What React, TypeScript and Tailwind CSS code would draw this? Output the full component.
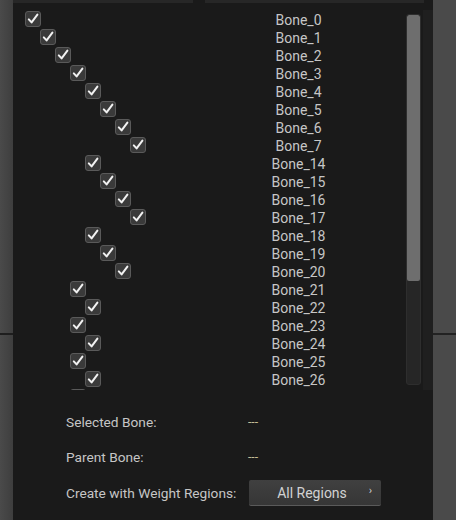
import React from "react";

const rows: [string, number][] = [
  ["Bone_0", 0],
  ["Bone_1", 1],
  ["Bone_2", 2],
  ["Bone_3", 3],
  ["Bone_4", 4],
  ["Bone_5", 5],
  ["Bone_6", 6],
  ["Bone_7", 7],
  ["Bone_14", 4],
  ["Bone_15", 5],
  ["Bone_16", 6],
  ["Bone_17", 7],
  ["Bone_18", 4],
  ["Bone_19", 5],
  ["Bone_20", 6],
  ["Bone_21", 3],
  ["Bone_22", 4],
  ["Bone_23", 3],
  ["Bone_24", 4],
  ["Bone_25", 3],
  ["Bone_26", 4],
  ["", 3],
];

function Check() {
  return (
    <div className="w-[16px] h-[16px] rounded-[3px] bg-[#3a3a3a] border border-[#5a5a5a] flex items-center justify-center">
      <svg width="12" height="12" viewBox="0 0 12 12">
        <path d="M1.8 6.4 L4.6 9.4 L10.4 1.6" fill="none" stroke="#f2f2f2" strokeWidth="2" strokeLinecap="round" strokeLinejoin="round" />
      </svg>
    </div>
  );
}

export default function App() {
  return (
    <div
      className="w-[456px] h-[520px] flex bg-[#1a1a1a] overflow-hidden text-[14px] text-[#c6c6c6]"
      style={{ fontFamily: "Roboto, 'Noto Sans', sans-serif" }}
    >
      <div className="w-[13px] flex flex-col bg-gradient-to-r from-[#4a4a4a] to-[#3e3e3e]">
        <div className="h-[333px]" />
        <div className="h-[2px] bg-[#1e1e1e]" />
      </div>
      <div className="w-[420px] flex flex-col bg-[#1a1a1a]">
        <div className="h-[3px] flex">
          <div className="w-[180px] bg-[#272727]" />
          <div className="w-[12px]" />
          <div className="w-[219px] bg-[#272727]" />
        </div>
        <div className="flex mt-[7px] h-[380px]">
          <div className="w-[379px] h-[380px] overflow-hidden">
            {rows.map(([name, lvl], i) => (
              <div key={i} className="h-[18px] flex items-center">
                <div className="w-[192px] flex items-center">
                  <div style={{ width: 12 + lvl * 15 }} />
                  <Check />
                </div>
                <div className="flex-1 text-center leading-[18px] pt-[1px]">{name}</div>
              </div>
            ))}
          </div>
          <div className="w-[14px]" />
          <div className="w-[15px] mt-[4px] h-[371px] rounded-[3px] bg-[#262626] border border-[#2e2e2e] flex flex-col overflow-hidden">
            <div className="h-[266px] bg-[#6e6e6e] rounded-[2px]" />
          </div>
          <div className="w-[2px]" />
          <div className="w-[10px] bg-[#1f1f1f]" />
        </div>
        <div className="flex-1 flex pl-[53px] pt-[23px] bg-[#1a1a1a] text-[13.7px]">
          <div className="flex flex-col">
            <div className="h-[18px] flex items-center w-[182px]">Selected Bone:</div>
            <div className="h-[18px] mt-[17px] flex items-center">Parent Bone:</div>
            <div className="h-[18px] mt-[18px] flex items-center">Create with Weight Regions:</div>
          </div>
          <div className="flex flex-col">
            <div className="h-[18px] flex items-center text-[#c2bd96] text-[12px]">---</div>
            <div className="h-[18px] mt-[17px] flex items-center text-[#c2bd96] text-[12px]">---</div>
            <div className="mt-[14px] ml-[1px] w-[132px] h-[26px] rounded-[2px] bg-gradient-to-b from-[#404040] to-[#363636] border-b border-[#5a5a5a] flex items-center relative">
              <div className="flex-1 text-center text-[#d2d2d2] pr-[6px] pt-[1px] text-[14px]">All Regions</div>
              <div className="absolute right-[9px] top-[3px] text-[11px] text-[#d0d0d0]">›</div>
            </div>
          </div>
        </div>
      </div>
      <div className="w-[23px] flex flex-col bg-[#4a4a4a]">
        <div className="h-[333px]" />
        <div className="h-[2px] bg-[#222222]" />
      </div>
    </div>
  );
}
